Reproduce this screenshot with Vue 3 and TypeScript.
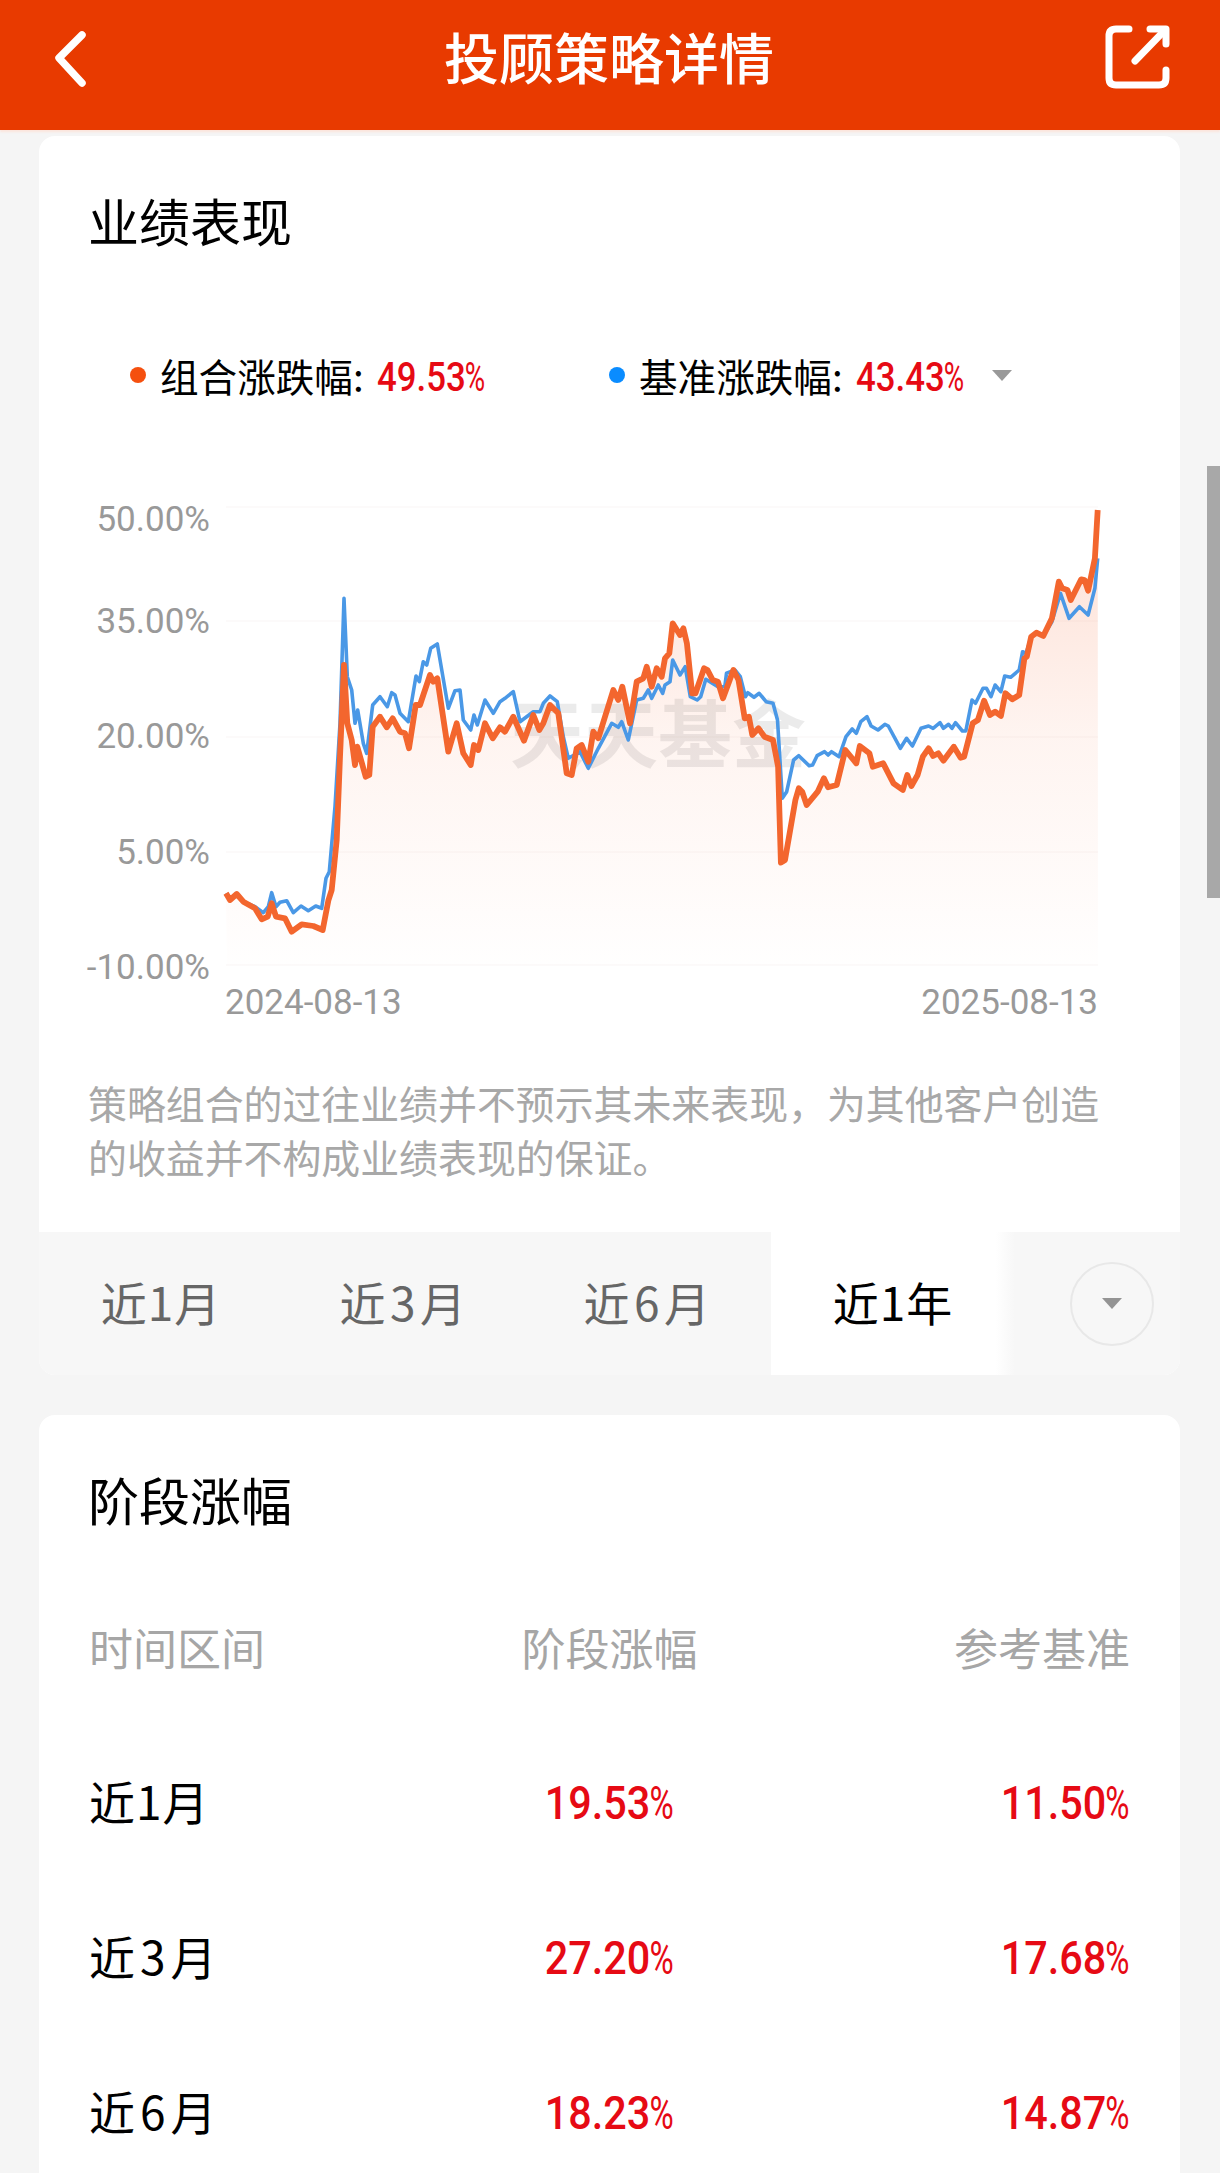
<script setup lang="ts">
type P = [number, number]

const orangeA: P[] = [[78,1210],[90,1230],[110,1212],[130,1235],[165,1255],[185,1288],[203,1280],[215,1240],[228,1280],[255,1285],[275,1325],[305,1303],[340,1308],[368,1320],[385,1232],[395,1200],[410,1050],[420,800],[432,525],[442,700],[455,750],[465,825],[472,770],[497,860],[508,855],[518,710],[540,680],[560,712],[578,685],[600,725],[615,730],[627,775],[647,645],[660,645],[670,615],[690,555],[700,575],[712,565],[745,785],[770,700],[790,790],[812,825],[822,765],[835,780],[855,700],[878,745],[900,712],[915,725],[940,680],[972,752],[1000,675],[1018,720],[1030,700],[1050,645],[1075,670],[1100,850],[1115,855],[1130,775],[1145,765],[1165,815],[1180,725],[1195,745],[1240,600],[1255,630],[1267,590],[1290,700],[1310,575],[1330,565],[1340,530],[1355,590],[1370,535],[1385,560],[1395,505],[1408,490],[1418,400],[1440,435]]
const orangeB: P[] = [[10,415],[20,460],[35,610],[45,610],[70,535],[80,540],[95,570],[110,575],[125,625],[155,540],[170,570],[188,685],[200,680],[210,735],[228,715],[245,740],[270,750],[285,830],[293,1118],[305,1110],[335,930],[345,895],[355,905],[368,945],[400,905],[418,865],[430,892],[455,885],[480,780],[512,820],[522,768],[550,790],[560,830],[590,820],[620,880],[647,900],[660,855],[672,888],[690,855],[705,800],[722,775],[735,798],[750,790],[765,812],[795,770],[815,803],[825,800],[850,700],[865,690],[883,632],[900,675],[915,665],[932,678],[945,610],[965,628],[985,615],[1000,505],[1007,500],[1020,440],[1035,428],[1055,438],[1080,385],[1100,275],[1110,295],[1125,300],[1135,330],[1165,268],[1175,270],[1185,302],[1205,205],[1213,60]]
const blueA: P[] = [[78,1210],[90,1230],[110,1212],[130,1235],[165,1250],[190,1268],[205,1250],[215,1208],[228,1250],[240,1237],[260,1232],[280,1268],[303,1248],[325,1262],[347,1248],[365,1255],[378,1165],[388,1145],[405,950],[420,700],[432,325],[442,560],[455,600],[465,700],[473,660],[490,760],[500,790],[518,645],[540,620],[562,650],[575,608],[585,615],[600,670],[625,695],[648,558],[658,575],[670,515],[680,525],[692,475],[712,462],[745,655],[765,602],[780,600],[790,690],[812,720],[822,675],[832,705],[855,630],[880,670],[900,635],[915,625],[940,605],[960,695],[1000,665],[1020,665],[1030,640],[1050,618],[1072,635],[1090,740],[1105,805],[1140,785],[1165,835],[1195,775],[1235,700],[1255,712],[1265,695],[1285,750],[1310,630],[1330,625],[1345,600],[1355,625],[1375,585],[1388,610],[1395,585],[1410,575],[1418,510],[1440,555]]
const blueB: P[] = [[15,530],[30,620],[50,630],[60,620],[75,568],[110,590],[130,590],[135,550],[160,540],[175,560],[190,620],[197,608],[215,622],[230,610],[250,635],[270,640],[283,690],[297,925],[310,905],[330,810],[345,797],[375,827],[385,825],[398,797],[420,785],[430,795],[440,785],[462,800],[482,740],[500,717],[512,730],[525,695],[543,680],[555,708],[575,720],[595,703],[605,708],[640,775],[658,745],[675,768],[700,715],[722,708],[735,715],[755,698],[765,715],[780,703],[790,715],[800,698],[820,723],[830,723],[848,630],[858,640],[880,595],[890,595],[903,620],[915,585],[932,605],[943,558],[960,562],[985,540],[995,485],[1005,490],[1020,440],[1035,428],[1055,438],[1080,395],[1105,310],[1130,385],[1160,350],[1185,375],[1205,295],[1213,205]]

const toPage = (a: P[], b: P[]): P[] => [
  ...a.map(([x, y]): P => [200 + x / 3, 490 + y / 3]),
  ...b.map(([x, y]): P => [680 + x / 2.904, 490 + y / 3]),
]
const toPath = (pts: P[]) =>
  pts.map(([x, y], i) => `${i ? 'L' : 'M'}${x.toFixed(1)} ${y.toFixed(1)}`).join('')

const orange = toPage(orangeA, orangeB)
const orangeLine = toPath(orange)
const blueLine = toPath(toPage(blueA, blueB))
const area = `${orangeLine}L1098 965L227 965Z`

const yLabels = [
  { t: '50.00%', y: 519 },
  { t: '35.00%', y: 621 },
  { t: '20.00%', y: 736 },
  { t: '5.00%', y: 852 },
  { t: '-10.00%', y: 967 },
]
const grid = [507, 621, 737, 852, 965]
const tabs = [
  { t: '近1月', on: false, wide: false },
  { t: '近3月', on: false, wide: true },
  { t: '近6月', on: false, wide: true },
  { t: '近1年', on: true, wide: false },
]
const rows = [
  { name: '近1月', wide: false, a: '19.53', b: '11.50' },
  { name: '近3月', wide: true, a: '27.20', b: '17.68' },
  { name: '近6月', wide: true, a: '18.23', b: '14.87' },
]
</script>

<template>
  <div class="page">
    <header class="bar">
      <svg class="bar-icon" width="60" height="70" viewBox="50 25 60 70" fill="none" stroke="#fff" stroke-width="7.5" stroke-linecap="round" stroke-linejoin="round">
        <path d="M82 35L59 58L82 83" />
      </svg>
      <h1 class="bar-title">投顾策略详情</h1>
      <svg class="bar-icon" width="80" height="80" viewBox="1098 20 80 80" fill="none" stroke="#fff" stroke-width="7" stroke-linecap="round" stroke-linejoin="round">
        <path d="M1129 29H1116Q1109 29 1109 36V78Q1109 85 1116 85H1159Q1166 85 1166 78V70" />
        <path d="M1135 61L1165 30" />
        <path d="M1150 29H1166V44" />
      </svg>
    </header>

    <section class="card perf">
      <h2 class="title">业绩表现</h2>
      <div class="legend">
        <div class="legend-item first">
          <i class="dot dot-o"></i>
          <span class="legend-label">组合涨跌幅:</span>
          <span class="legend-val"><b class="num">49.53<small>%</small></b></span>
        </div>
        <div class="legend-item">
          <i class="dot dot-b"></i>
          <span class="legend-label">基准涨跌幅:</span>
          <span class="legend-val"><b class="num">43.43<small>%</small></b></span>
          <i class="tri"></i>
        </div>
      </div>

      <svg class="chart" width="1141" height="540" viewBox="39 490 1141 540">
        <defs>
          <linearGradient id="fill" x1="0" y1="0" x2="0" y2="1">
            <stop offset="0" stop-color="#f8794a" stop-opacity=".24" />
            <stop offset=".5" stop-color="#f8794a" stop-opacity=".08" />
            <stop offset="1" stop-color="#f8794a" stop-opacity=".005" />
          </linearGradient>
        </defs>
        <line v-for="g in grid" :key="g" x1="226" x2="1098" :y1="g" :y2="g" stroke="#fbf9f8" stroke-width="1.5" />
        <path :d="area" fill="url(#fill)" />
        <text class="mark" x="510" y="762">天天基金</text>
        <path :d="blueLine" fill="none" stroke="#4a98e6" stroke-width="3.6" stroke-linejoin="round" />
        <path :d="orangeLine" fill="none" stroke="#f3662e" stroke-width="5.8" stroke-linejoin="round" />
        <text v-for="l in yLabels" :key="l.t" class="axis" x="210" :y="l.y + 12" text-anchor="end">{{ l.t }}</text>
        <text class="axis" x="225" y="1014">2024-08-13</text>
        <text class="axis" x="1098" y="1014" text-anchor="end">2025-08-13</text>
      </svg>

      <p class="note">策略组合的过往业绩并不预示其未来表现，为其他客户创造的收益并不构成业绩表现的保证。</p>

      <div class="tabs">
        <div v-for="tab in tabs" :key="tab.t" class="tab" :class="{ on: tab.on, wide: tab.wide }">{{ tab.t }}</div>
        <div class="more">
          <span class="circle"><i class="tri tri-small"></i></span>
        </div>
      </div>
    </section>

    <section class="card stage">
      <h2 class="title">阶段涨幅</h2>
      <div class="tr th">
        <span>时间区间</span>
        <span>阶段涨幅</span>
        <span>参考基准</span>
      </div>
      <div v-for="r in rows" :key="r.name" class="tr row">
        <span class="row-name" :class="{ wide: r.wide }">{{ r.name }}</span>
        <span><b class="num big mid">{{ r.a }}<small>%</small></b></span>
        <span><b class="num big end">{{ r.b }}<small>%</small></b></span>
      </div>
    </section>

    <div class="scroll"></div>
  </div>
</template>

<style scoped>
.page {
  position: relative;
  height: 2173px;
  overflow: hidden;
  background: #f5f5f5;
  font-family: "Noto Sans CJK SC", "Noto Sans", sans-serif;
  color: #000;
}
.bar {
  height: 130px;
  background: #e83a00;
  display: flex;
  align-items: flex-start;
  justify-content: space-between;
  padding: 0 42px 0 50px;
  box-shadow: 0 2px 2px #fbe5dc;
}
.bar-icon {
  margin-top: 25px;
  flex: none;
}
.bar-icon:last-child {
  margin-top: 20px;
}
.bar-title {
  margin: 0 0 0 10px;
  font-size: 55px;
  line-height: 111px;
  font-weight: 500;
  color: #fff;
}
.card {
  margin: 0 40px 0 39px;
  background: #fff;
  border-radius: 16px;
}
.perf {
  margin-top: 6px;
  overflow: hidden;
  padding-top: 54px;
}
.stage {
  margin-top: 40px;
  padding: 54px 50px 0;
  min-height: 800px;
}
.title {
  margin: 0 0 0 -1px;
  font-size: 51px;
  line-height: 60px;
  font-weight: 400;
  color: #000;
}
.perf .title {
  margin-left: 49px;
}
.legend {
  display: flex;
  margin: 100px 0 0 91px;
  height: 50px;
}
.legend-item {
  display: flex;
  align-items: center;
}
.legend-item.first {
  width: 479px;
}
.dot {
  width: 16px;
  height: 16px;
  border-radius: 50%;
  margin-right: 14px;
  flex: none;
}
.dot-o {
  background: #f5500f;
}
.dot-b {
  background: #0a8cff;
}
.legend-label {
  font-size: 38.6px;
  line-height: 50px;
  color: #000;
}
.legend-val {
  width: 136px;
  margin-left: 13px;
  flex: none;
  display: flex;
  align-items: center;
  height: 50px;
}
.num {
  display: inline-block;
  font-family: Roboto, "Liberation Sans", sans-serif;
  font-weight: 500;
  font-size: 40px;
  line-height: 50px;
  color: #e60a14;
  transform: translateY(3px) scaleX(0.87);
  transform-origin: left center;
  white-space: nowrap;
}
.num small {
  display: inline-block;
  font-size: 1em;
  font-weight: 400;
  margin-left: -1px;
  width: 0.6em;
  transform: scaleX(0.8);
  transform-origin: left center;
}
.big {
  font-size: 47px;
  transform: scaleX(0.88);
}
.mid {
  transform-origin: center center;
}
.end {
  transform-origin: right center;
}
.tri {
  display: block;
  width: 0;
  height: 0;
  border-left: 10px solid transparent;
  border-right: 10px solid transparent;
  border-top: 11px solid #999;
  flex: none;
}
.tri-small {
  border-top-color: #949494;
}
.chart {
  display: block;
  margin-top: 90px;
}
.axis {
  font-family: Roboto, "Noto Sans", sans-serif;
  font-size: 35px;
  fill: #999;
}
.mark {
  font-size: 74px;
  font-weight: 700;
  fill: #000;
  fill-opacity: 0.08;
}
.note {
  margin: 45px 49px 0;
  font-size: 38.9px;
  line-height: 54px;
  color: #a8a8a8;
}
.tabs {
  margin-top: 49px;
  height: 143px;
  background: #f7f7f7;
  display: flex;
}
.tab {
  width: 244px;
  flex: none;
  text-align: center;
  font-size: 46px;
  line-height: 139px;
  letter-spacing: 1px;
  color: #666;
}
.tab.wide {
  letter-spacing: 4.5px;
}
.tab.on {
  color: #000;
  background: linear-gradient(to right, #fff 92%, #f7f7f7);
}
.more {
  flex: 1;
  display: flex;
  align-items: center;
  justify-content: flex-end;
  padding-right: 26px;
}
.circle {
  width: 84px;
  height: 84px;
  box-sizing: border-box;
  border: 2px solid #e8e8e8;
  border-radius: 50%;
  display: flex;
  align-items: center;
  justify-content: center;
}
.tr {
  display: grid;
  grid-template-columns: 1fr 1fr 1fr;
  font-size: 44px;
}
.tr span:nth-child(2) {
  text-align: center;
}
.tr span:nth-child(3) {
  text-align: right;
}
.th {
  margin-top: 88px;
  margin-bottom: 45px;
  line-height: 60px;
  color: #a6a6a6;
}
.row {
  height: 155px;
  align-items: center;
  color: #000;
}
.row-name {
  font-size: 46px;
  letter-spacing: 1px;
}
.row-name.wide {
  letter-spacing: 5px;
}
.scroll {
  position: absolute;
  left: 1207px;
  top: 466px;
  width: 13px;
  height: 432px;
  background: #a8a8a8;
}
</style>

<style>
html,
body {
  margin: 0;
  overflow: hidden;
  background: #f5f5f5;
}
</style>
